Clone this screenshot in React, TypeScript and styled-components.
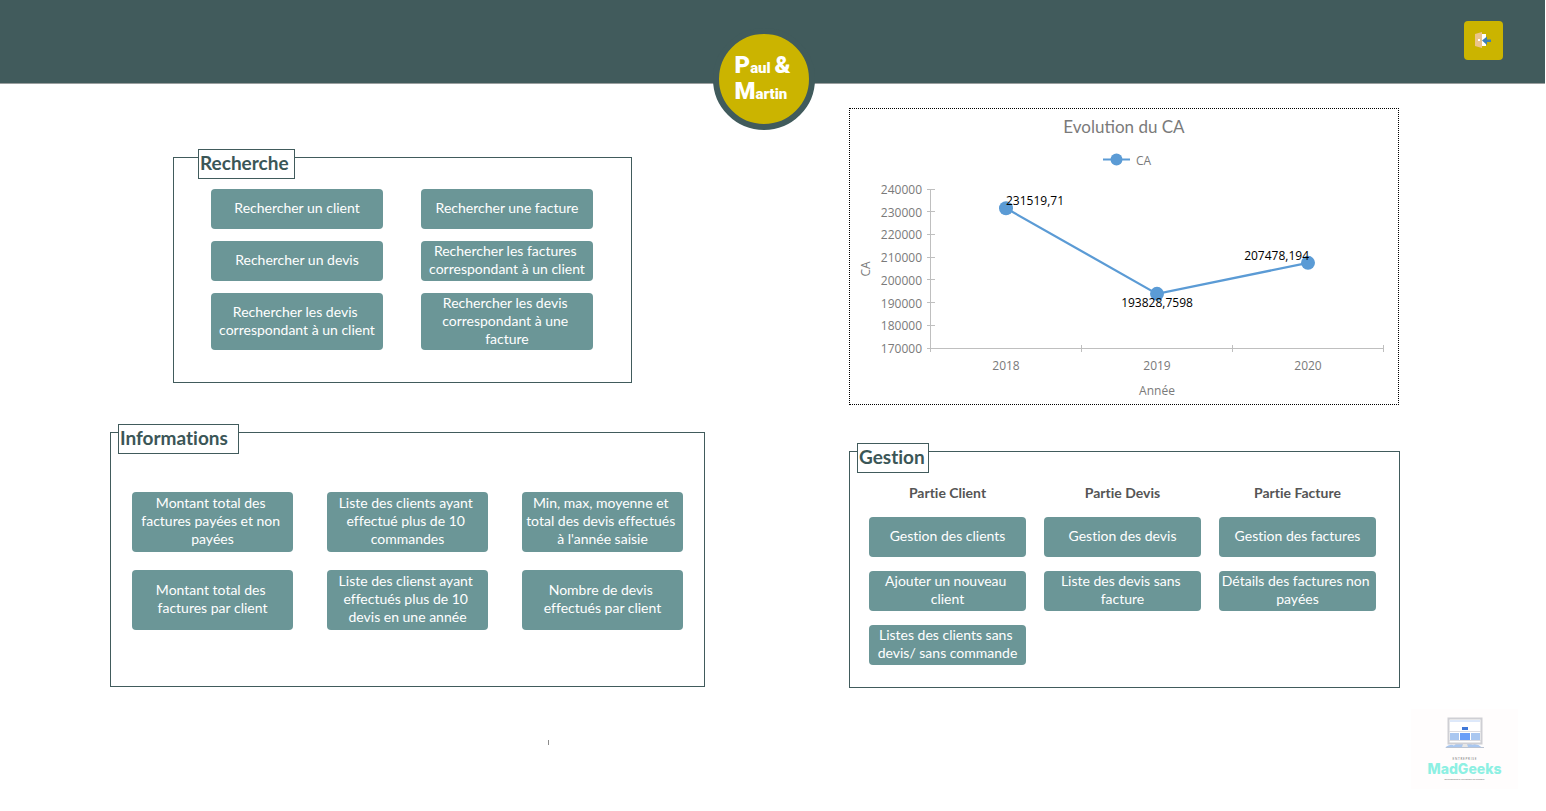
import React from "react";
import styled, { createGlobalStyle } from "styled-components";

const GlobalStyle = createGlobalStyle`
  * { box-sizing: border-box; }
  body { margin: 0; background: #fff; font-family: Lato, "Open Sans", sans-serif; font-variant-ligatures: none; }
`;

const Header = styled.header`
  position: relative;
  display: flex;
  justify-content: flex-end;
  align-items: flex-start;
  height: 84px;
  margin-right: 1px;
  padding: 21px 42px 0 0;
  background: #415b5c;
  border-bottom: 1px solid #9a9f9f;
`;

const ExitButton = styled.button`
  width: 39px;
  height: 39px;
  padding: 0;
  border: 0;
  border-radius: 4px;
  background: #cbb400;
  cursor: pointer;
  svg { display: block; }
`;

const Brand = styled.h1`
  position: absolute;
  top: 28px;
  left: calc(50% - 60px);
  width: 102px;
  height: 102px;
  margin: 0;
  padding: 21px 0 0 16px;
  border: 6px solid #415b5c;
  border-radius: 50%;
  background: #cbb400;
  color: #fff;
  font-family: Roboto, sans-serif;
  font-weight: 900;
  font-size: 15px;
  line-height: 26px;
  white-space: nowrap;
`;

const Capital = styled.span`
  font-size: 24px;
  line-height: 0;
`;

const Main = styled.main`
  display: grid;
  grid-template-columns: 595fr 551fr;
  column-gap: 144px;
  padding: 24px 146px 0 110px;
`;

const Column = styled.div<{ $top: number; $gap: number }>`
  display: flex;
  flex-direction: column;
  gap: ${(p) => p.$gap}px;
  padding-top: ${(p) => p.$top}px;
`;

const Panel = styled.section<{ $padding: string; $inset?: string }>`
  position: relative;
  margin: ${(p) => p.$inset || "0"};
  padding: ${(p) => p.$padding};
  border: 1px solid #415b5c;
`;

const PanelTitle = styled.h2<{ $left: number; $width: number }>`
  position: absolute;
  top: -9px;
  left: ${(p) => p.$left}px;
  width: ${(p) => p.$width}px;
  height: 30px;
  margin: 0;
  padding-left: 1px;
  border: 1px solid #415b5c;
  background: #fff;
  color: #3b5657;
  font-size: 19px;
  line-height: 26px;
  font-weight: 700;
  white-space: nowrap;
`;

const ButtonGrid = styled.div<{ $cols: number; $gap: string }>`
  display: grid;
  grid-template-columns: repeat(${(p) => p.$cols}, 1fr);
  gap: ${(p) => p.$gap};
`;

const ActionButton = styled.button<{ $height: number }>`
  min-height: ${(p) => p.$height}px;
  padding: 0 0 2px;
  border: 0;
  border-radius: 4px;
  background: #6b9697;
  color: #fff;
  font-family: inherit;
  font-size: 14px;
  line-height: 18px;
  font-variant-ligatures: none;
  white-space: pre;
  cursor: pointer;
`;

const PartTitle = styled.h3`
  margin: 0;
  padding-bottom: 2px;
  color: #555;
  font-size: 14px;
  line-height: 16px;
  font-weight: 700;
  text-align: center;
`;

const PartColumn = styled.div`
  display: flex;
  flex-direction: column;
  gap: 14px;
`;

const ChartCard = styled.figure`
  margin: 0 1px 0 0;
  border: 1px dotted #000;
  svg { display: block; width: 100%; height: auto; }
`;

const Footer = styled.footer`
  display: flex;
  justify-content: space-between;
  padding: 21px 28px 0 548px;
`;

const Caret = styled.span`
  width: 1px;
  height: 5px;
  margin-top: 31px;
  background: #8c8c8c;
`;

const Credit = styled.div`
  display: flex;
  flex-direction: column;
  align-items: center;
  width: 107px;
  height: 80px;
  padding-top: 8px;
  background: #fffdfd;
  svg { display: block; }
`;

const CreditName = styled.strong`
  color: #8df0e3;
  font-family: Inter, sans-serif;
  font-size: 14px;
  line-height: 16px;
  font-weight: 800;
`;

const CreditNote = styled.small<{ $size: number }>`
  color: #777;
  font-size: ${(p) => p.$size}px;
  line-height: 4px;
  white-space: nowrap;
`;

const searches = [
  ["Rechercher un client", 40],
  ["Rechercher une facture", 40],
  ["Rechercher un devis", 40],
  ["Rechercher les factures \ncorrespondant à un client", 40],
  ["Rechercher les devis \ncorrespondant à un client", 57],
  ["Rechercher les devis \ncorrespondant à une \nfacture", 57],
] as const;

const reports = [
  "Montant total des \nfactures payées et non \npayées",
  "Liste des clients ayant \neffectué plus de 10 \ncommandes",
  "Min, max, moyenne et \ntotal des devis effectués \nà l'année saisie",
  "Montant total des \nfactures par client",
  "Liste des clienst ayant \neffectués plus de 10 \ndevis en une année",
  "Nombre de devis \neffectués par client",
];

const parts = [
  { title: "Partie Client", actions: ["Gestion des clients", "Ajouter un nouveau \nclient", "Listes des clients sans \ndevis/ sans commande"] },
  { title: "Partie Devis", actions: ["Gestion des devis", "Liste des devis sans \nfacture"] },
  { title: "Partie Facture", actions: ["Gestion des factures", "Détails des factures non \npayées"] },
];

const ticks = [240000, 230000, 220000, 210000, 200000, 190000, 180000, 170000];

function RevenueChart() {
  const y = (v: number) => 80 + ((240000 - v) * 159) / 70000;
  const points = [
    { x: 156, v: 231519.71, label: "231519,71", lx: 156, ly: 96, anchor: "start" },
    { x: 307, v: 193828.7598, label: "193828,7598", lx: 307, ly: 198, anchor: "middle" },
    { x: 458, v: 207478.194, label: "207478,194", lx: 459, ly: 151, anchor: "end" },
  ] as const;
  return (
    <svg viewBox="0 0 548 295" role="img" aria-label="Evolution du CA" fontFamily='"Open Sans", sans-serif' fontSize="12" fill="#7a7a7a">
      <text x="274" y="24" textAnchor="middle" fontFamily="Lato, sans-serif" fontSize="17" fontVariant="common-ligatures">Evolution du CA</text>
      <path d="M253 50.500H280" stroke="#5b9bd5" strokeWidth="2" />
      <circle cx="266.500" cy="50.500" r="6" fill="#5b9bd5" />
      <text x="286" y="56">CA</text>
      <g stroke="#bfbfbf" fill="none" shapeRendering="crispEdges">
        <path d="M80.500 80V239M80 239.500H533" />
        {ticks.map((t) => <path key={t} d={`M77 ${Math.floor(y(t)) + 0.5}h8`} />)}
        {[80, 231, 382, 533].map((x) => <path key={x} d={`M${x + 0.5} 236v7`} />)}
      </g>
      {ticks.map((t) => <text key={t} x="72" y={Math.round(y(t)) + 5} textAnchor="end">{t}</text>)}
      {[2018, 2019, 2020].map((t, i) => <text key={t} x={156 + i * 151} y="261" textAnchor="middle">{t}</text>)}
      <text x="307" y="286" textAnchor="middle">Année</text>
      <text transform="translate(20 160) rotate(-90)" textAnchor="middle">CA</text>
      <polyline points={points.map((p) => `${p.x},${y(p.v)}`).join(" ")} fill="none" stroke="#5b9bd5" strokeWidth="2.250" />
      {points.map((p) => <circle key={p.x} cx={p.x} cy={y(p.v)} r="7" fill="#5b9bd5" />)}
      {points.map((p) => <text key={p.x} x={p.lx} y={p.ly} textAnchor={p.anchor} fill="#000">{p.label}</text>)}
    </svg>
  );
}

export default function App() {
  return (
    <>
      <GlobalStyle />
      <Header>
        <Brand>
          <Capital>P</Capital>aul <Capital>&amp;</Capital>
          <br />
          <Capital>M</Capital>artin
        </Brand>
        <ExitButton aria-label="Quitter">
          <svg width="39" height="39" viewBox="0 0 39 39">
            <path d="M17 13h5v12h-5z" fill="#fff" />
            <path d="M11 13l7-2v16l-7-2z" fill="#ebc48b" />
            <path d="M14 18h2v2h-2z" fill="#fff" />
            <path d="M18 19.500l5-4v3h4v2.500h-4v3z" fill="#3f7fb5" />
          </svg>
        </ExitButton>
      </Header>
      <Main>
        <Column $top={49} $gap={49}>
          <Panel $padding="31px 38px 32px 37px" $inset="0 73px 0 63px">
            <PanelTitle $left={24} $width={97}>Recherche</PanelTitle>
            <ButtonGrid $cols={2} $gap="12px 38px">
              {searches.map(([label, h]) => <ActionButton key={label} $height={h}>{label}</ActionButton>)}
            </ButtonGrid>
          </Panel>
          <Panel $padding="59px 21px 56px">
            <PanelTitle $left={7} $width={121}>Informations</PanelTitle>
            <ButtonGrid $cols={3} $gap="18px 34px">
              {reports.map((label) => <ActionButton key={label} $height={60}>{label}</ActionButton>)}
            </ButtonGrid>
          </Panel>
        </Column>
        <Column $top={0} $gap={46}>
          <ChartCard><RevenueChart /></ChartCard>
          <Panel $padding="33px 23px 22px 19px">
            <PanelTitle $left={7} $width={72}>Gestion</PanelTitle>
            <ButtonGrid $cols={3} $gap="18px">
              {parts.map((part) => (
                <PartColumn key={part.title}>
                  <PartTitle>{part.title}</PartTitle>
                  {part.actions.map((label) => <ActionButton key={label} $height={40}>{label}</ActionButton>)}
                </PartColumn>
              ))}
            </ButtonGrid>
          </Panel>
        </Column>
      </Main>
      <Footer>
        <Caret />
        <Credit>
          <svg width="80" height="40" viewBox="0 0 80 40" aria-hidden="true">
            <path d="M20 30.500q5-4 9-2 6-6 12-3 4-1 6 2 5-2 10 3z" fill="#a9c7f0" />
            <path d="M23.500 1.500h33v25h-33z" fill="#fff" stroke="#cfcfd4" strokeWidth="2" />
            <path d="M25 4h30" stroke="#bcd2f5" />
            <path d="M24 14.500h32M24 23.500h32" stroke="#dcdce0" />
            <path d="M37 10h6v3h-6z" fill="#3f78d8" />
            <path d="M25 16h9v7h-9zM46 16h9v7h-9z" fill="#a9c7f0" />
            <path d="M35 16h10v7h-10z" fill="#6a9ff8" />
            <path d="M38 27h4l1 3h-6z" fill="#e6e6e6" />
            <path d="M21 30.500h38" stroke="#b9c3d2" />
          </svg>
          <CreditNote $size={3}>E N T R E P R I S E</CreditNote>
          <CreditName>MadGeeks</CreditName>
          <CreditNote $size={2}>Développement &amp; Informatique par managers</CreditNote>
        </Credit>
      </Footer>
    </>
  );
}
